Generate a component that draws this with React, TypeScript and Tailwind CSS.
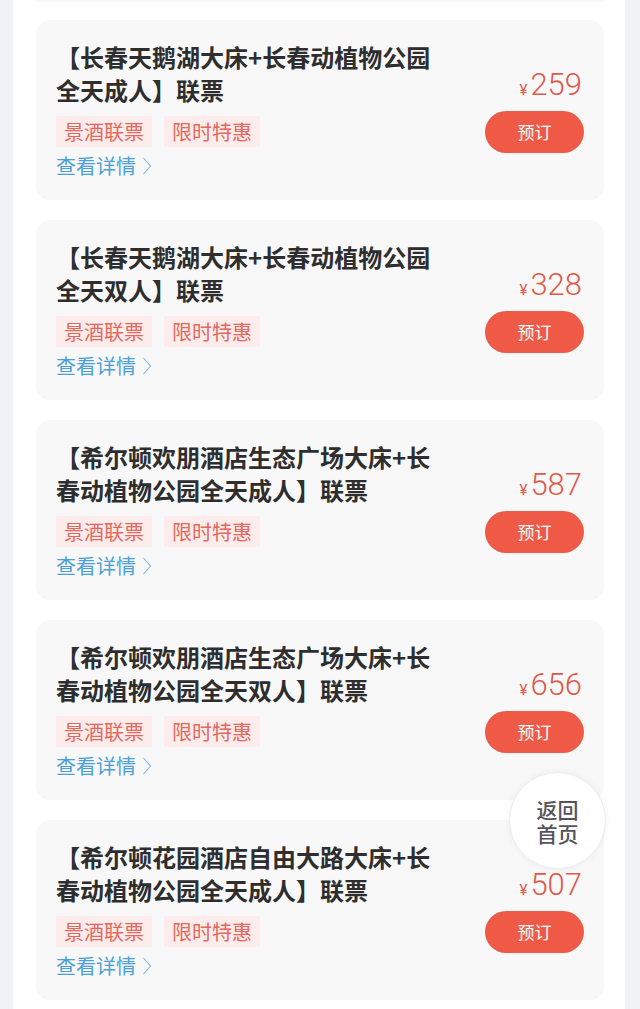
const items = [
  { title: '【长春天鹅湖大床+长春动植物公园全天成人】联票', price: 259 },
  { title: '【长春天鹅湖大床+长春动植物公园全天双人】联票', price: 328 },
  { title: '【希尔顿欢朋酒店生态广场大床+长春动植物公园全天成人】联票', price: 587 },
  { title: '【希尔顿欢朋酒店生态广场大床+长春动植物公园全天双人】联票', price: 656 },
  { title: '【希尔顿花园酒店自由大路大床+长春动植物公园全天成人】联票', price: 507 },
];

const cjk = { fontFamily: '"Noto Sans CJK SC", "Noto Sans", sans-serif' };

function Chevron() {
  return (
    <svg width="10" height="20" viewBox="0 0 10 20" className="ml-[6px]">
      <polyline points="1.5,2 8.5,10 1.5,18" fill="none" stroke="#7bb8e4" strokeWidth="1.1" />
    </svg>
  );
}

function TicketCard({ title, price }: { title: string; price: number }) {
  return (
    <div className="flex h-[180px] rounded-[14px] bg-[#f8f8f9] pl-5 pr-5 pt-[20px]">
      <div className="flex-1">
        <div className="w-[384px] text-[24px] font-bold leading-[33px] text-[#2e2e2e]">{title}</div>
        <div className="mt-[10px] flex gap-3">
          <span className="rounded-[2px] bg-[#fdeceb] px-2 text-[20px] leading-[31px] text-[#e2685c]">景酒联票</span>
          <span className="rounded-[2px] bg-[#fdeceb] px-2 text-[20px] leading-[31px] text-[#e2685c]">限时特惠</span>
        </div>
        <div className="mt-[4px] flex items-center text-[20px] leading-[30px] text-[#4c9fd8]">
          查看详情
          <Chevron />
        </div>
      </div>
      <div className="flex w-[99px] flex-col items-end pt-[27px]">
        <div className="flex items-baseline pr-[2px] text-[#e0594a]" style={{ fontFamily: 'Roboto, "Liberation Sans", sans-serif' }}>
          <span className="mr-[3px] text-[15px]">¥</span>
          <span className="text-[31px] font-light leading-[36px]">{price}</span>
        </div>
        <button className="mt-[8px] h-[42px] w-[99px] rounded-full bg-[#ee5a45] text-[17px] text-white" style={cjk}>
          预订
        </button>
      </div>
    </div>
  );
}

export default function App() {
  return (
    <div className="relative h-[1009px] overflow-hidden bg-[#f1f2f6] pl-[13px] pr-[15px]" style={cjk}>
      <div className="h-full bg-white px-[21px] pl-[23px]">
        {/* tail of the card above */}
        <div className="h-[2px] rounded-b-[14px] bg-[#f8f8f9]" />
        <div className="flex flex-col gap-5 pt-[18px]">
          {items.map((it) => (
            <TicketCard key={it.price} title={it.title} price={it.price} />
          ))}
        </div>
      </div>

      {/* floating back-home button */}
      <div className="absolute left-[509px] top-[772px] flex h-[97px] w-[97px] items-center justify-center rounded-full border border-[#ececec] bg-white/95 shadow-[0_0_6px_rgba(0,0,0,0.06)]">
        <div className="w-[44px] break-all text-center text-[21px] font-medium leading-[24px] text-[#565459]">返回首页</div>
      </div>
    </div>
  );
}
